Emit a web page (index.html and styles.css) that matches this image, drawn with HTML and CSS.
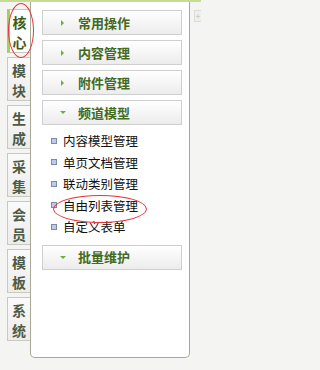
FILE: index.html
```html
<!DOCTYPE html>
<html lang="zh">
<head>
<meta charset="utf-8">
<link rel="stylesheet" href="styles.css">
</head>
<body>
<div class="topline"></div>
<div class="frame">
  <div class="tabs">
    <div class="tab active">核<br>心</div>
    <div class="tab">模<br>块</div>
    <div class="tab">生<br>成</div>
    <div class="tab">采<br>集</div>
    <div class="tab">会<br>员</div>
    <div class="tab">模<br>板</div>
    <div class="tab">系<br>统</div>
  </div>
  <div class="panel">
    <div class="head"><span class="arr right"></span>常用操作</div>
    <div class="head"><span class="arr right"></span>内容管理</div>
    <div class="head"><span class="arr right"></span>附件管理</div>
    <div class="head"><span class="arr down"></span>频道模型</div>
    <ul class="items">
      <li><span class="dot"></span>内容模型管理</li>
      <li><span class="dot"></span>单页文档管理</li>
      <li><span class="dot"></span>联动类别管理</li>
      <li><span class="dot"></span>自由列表管理</li>
      <li><span class="dot"></span>自定义表单</li>
    </ul>
    <div class="head"><span class="arr down"></span>批量维护</div>
  </div>
  <div class="side"><div class="mini">+</div></div>
</div>
<div class="mark mark1"></div>
<div class="mark mark2"></div>
</body>
</html>
```
FILE: styles.css
```css
html, body {
  margin: 0;
  padding: 0;
  background: #f4f4f2;
}
body {
  width: 201px;
  height: 370px;
  font-family: "Noto Sans CJK SC", "Noto Sans", sans-serif;
  position: relative;
  overflow: hidden;
}
.topline {
  height: 2px;
  background: #c6dc96;
}
.frame {
  display: flex;
  align-items: flex-start;
}
.tabs {
  width: 23px;
  padding: 7px 0 0 7px;
  display: flex;
  flex-direction: column;
  gap: 4px;
}
.tab {
  box-sizing: border-box;
  height: 44px;
  border: 1px solid #c9c9c2;
  border-right: none;
  background: linear-gradient(#fafafa, #ececec);
  color: #4d5a45;
  font-weight: bold;
  font-size: 14px;
  line-height: 20px;
  text-align: center;
  padding-top: 2px;
}
.tab.active {
  background: #fff;
  border-left: 3px solid #a6cf5a;
  color: #3e5a17;
  padding-right: 1px;
}
.panel {
  box-sizing: border-box;
  width: 160px;
  height: 356px;
  background: #fff;
  border: 1px solid #a8a894;
  border-top: none;
  border-radius: 0 0 5px 5px;
  padding: 8px 7px 0 11px;
}
.head {
  box-sizing: border-box;
  height: 25px;
  margin-bottom: 5px;
  border: 1px solid #cfcfcf;
  background: linear-gradient(#ffffff, #ececec);
  color: #446a1e;
  font-weight: bold;
  font-size: 13px;
  line-height: 22px;
  display: flex;
  align-items: center;
  padding-left: 18px;
}
.arr {
  width: 0;
  height: 0;
  margin-right: 14px;
}
.arr.right {
  border-top: 3px solid transparent;
  border-bottom: 3px solid transparent;
  border-left: 3px solid #6fae3e;
}
.arr.down {
  border-left: 3px solid transparent;
  border-right: 3px solid transparent;
  border-top: 3px solid #6fae3e;
  margin-left: -1px;
  margin-right: 12px;
}
.items {
  list-style: none;
  margin: 3px 0 7px;
  padding: 0;
}
.items li {
  height: 21.5px;
  display: flex;
  align-items: center;
  font-size: 12.5px;
  color: #111;
  margin-left: 9px;
}
.dot {
  box-sizing: border-box;
  width: 6px;
  height: 6px;
  border: 1px solid #7d8ba3;
  background: #b9cbee;
  margin-right: 6px;
}
.side {
  flex: 1;
  padding-top: 8px;
  display: flex;
  justify-content: flex-end;
}
.mini {
  width: 6px;
  height: 10px;
  border: 1px solid #dcdcd4;
  border-right: none;
  background: #f0f0ea;
  color: #bbb;
  font-size: 8px;
  line-height: 10px;
  text-align: center;
}
.mark {
  position: absolute;
  border: 1px solid #e8333a;
  border-radius: 50%;
}
.mark1 {
  left: 8px;
  top: 3px;
  width: 24px;
  height: 53px;
}
.mark2 {
  left: 53px;
  top: 195px;
  width: 92px;
  height: 26px;
}
```
